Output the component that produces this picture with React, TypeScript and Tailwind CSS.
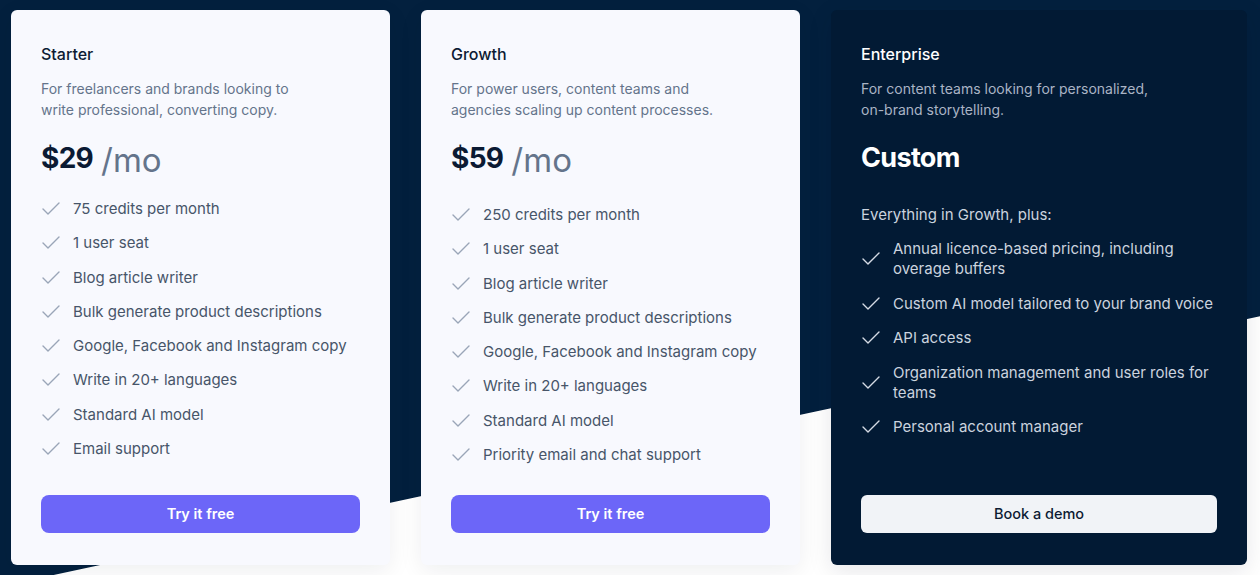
import React from 'react'
import { Check } from 'lucide-react'

type Plan = {
  name: string
  desc: string[]
  price: string
  features: string[]
  listTop: string
}

const plans: Plan[] = [
  {
    name: 'Starter',
    desc: ['For freelancers and brands looking to', 'write professional, converting copy.'],
    price: '$29',
    listTop: 'mt-[22px]',
    features: [
      '75 credits per month',
      '1 user seat',
      'Blog article writer',
      'Bulk generate product descriptions',
      'Google, Facebook and Instagram copy',
      'Write in 20+ languages',
      'Standard AI model',
      'Email support',
    ],
  },
  {
    name: 'Growth',
    desc: ['For power users, content teams and', 'agencies scaling up content processes.'],
    price: '$59',
    listTop: 'mt-[28px]',
    features: [
      '250 credits per month',
      '1 user seat',
      'Blog article writer',
      'Bulk generate product descriptions',
      'Google, Facebook and Instagram copy',
      'Write in 20+ languages',
      'Standard AI model',
      'Priority email and chat support',
    ],
  },
]

const enterpriseFeatures = [
  'Annual licence-based pricing, including overage buffers',
  'Custom AI model tailored to your brand voice',
  'API access',
  'Organization management and user roles for teams',
  'Personal account manager',
]

const PlanCard = ({ plan }: { plan: Plan }) => (
  <div className="w-[379px] h-[555px] shrink-0 flex flex-col rounded-md bg-[#f8f9fe] px-[30px] pt-8 pb-8 shadow-[0_6px_24px_rgba(15,23,42,0.07)]">
    <h3 className="text-base leading-6 font-medium text-[#0d1b33]">{plan.name}</h3>
    <p className="mt-3 text-sm leading-[21px] text-[#64748b]">
      {plan.desc[0]}
      <br />
      {plan.desc[1]}
    </p>
    <div className="mt-6 flex">
      <span className="text-[28px] leading-none font-bold tracking-tight text-[#0b1a33]">{plan.price}</span>
      <span className="ml-2 text-[33px] leading-none font-normal text-[#64748b]">/mo</span>
    </div>
    <ul className={`${plan.listTop} flex flex-col gap-[14.3px]`}>
      {plan.features.map((f) => (
        <li key={f} className="flex items-center">
          <Check size={24} strokeWidth={1.4} className="-ml-[2px] -my-[2px] shrink-0 text-[#9aa5b8]" />
          <span className="ml-[10px] text-[15px] leading-5 text-[#475569]">{f}</span>
        </li>
      ))}
    </ul>
    <button className="mt-auto h-[38px] w-full rounded-lg bg-[#6c66f8] text-[14.5px] font-semibold text-white">
      Try it free
    </button>
  </div>
)

export default function App() {
  return (
    <div className="relative w-[1260px] h-[575px] overflow-hidden bg-[#03203e] font-['Inter',sans-serif]">
      {/* diagonal white band behind cards */}
      <div className="absolute inset-0 bg-white [clip-path:polygon(0_102%,100%_55%,100%_100%,0_100%)]" />
      <div className="relative flex gap-[31px] pl-[11px] pt-[10px]">
        {plans.map((p) => (
          <PlanCard key={p.name} plan={p} />
        ))}
        <div className="w-[416px] h-[555px] shrink-0 flex flex-col rounded-md bg-[#021a34] px-[30px] pt-8 pb-8 shadow-[0_6px_24px_rgba(15,23,42,0.10)]">
          <h3 className="text-base leading-6 font-medium text-white">Enterprise</h3>
          <p className="mt-3 text-sm leading-[21px] text-[#aab4c5]">
            For content teams looking for personalized,
            <br />
            on-brand storytelling.
          </p>
          <div className="mt-6 h-7 text-[27px] leading-7 font-bold tracking-tight text-white">Custom</div>
          <p className="mt-[33px] text-[15px] leading-5 text-[#cbd3df]">Everything in Growth, plus:</p>
          <ul className="mt-[14px] flex flex-col gap-[14.5px]">
            {enterpriseFeatures.map((f) => (
              <li key={f} className="flex items-center">
                <Check size={24} strokeWidth={1.4} className="-ml-[2px] -my-[2px] shrink-0 text-[#d5dbe5]" />
                <span className="ml-[10px] text-[15px] leading-5 text-[#cbd3df]">{f}</span>
              </li>
            ))}
          </ul>
          <button className="mt-auto h-[38px] w-full rounded-md bg-[#f1f3f7] text-[14.5px] font-medium text-[#0d1b33]">
            Book a demo
          </button>
        </div>
      </div>
    </div>
  )
}
